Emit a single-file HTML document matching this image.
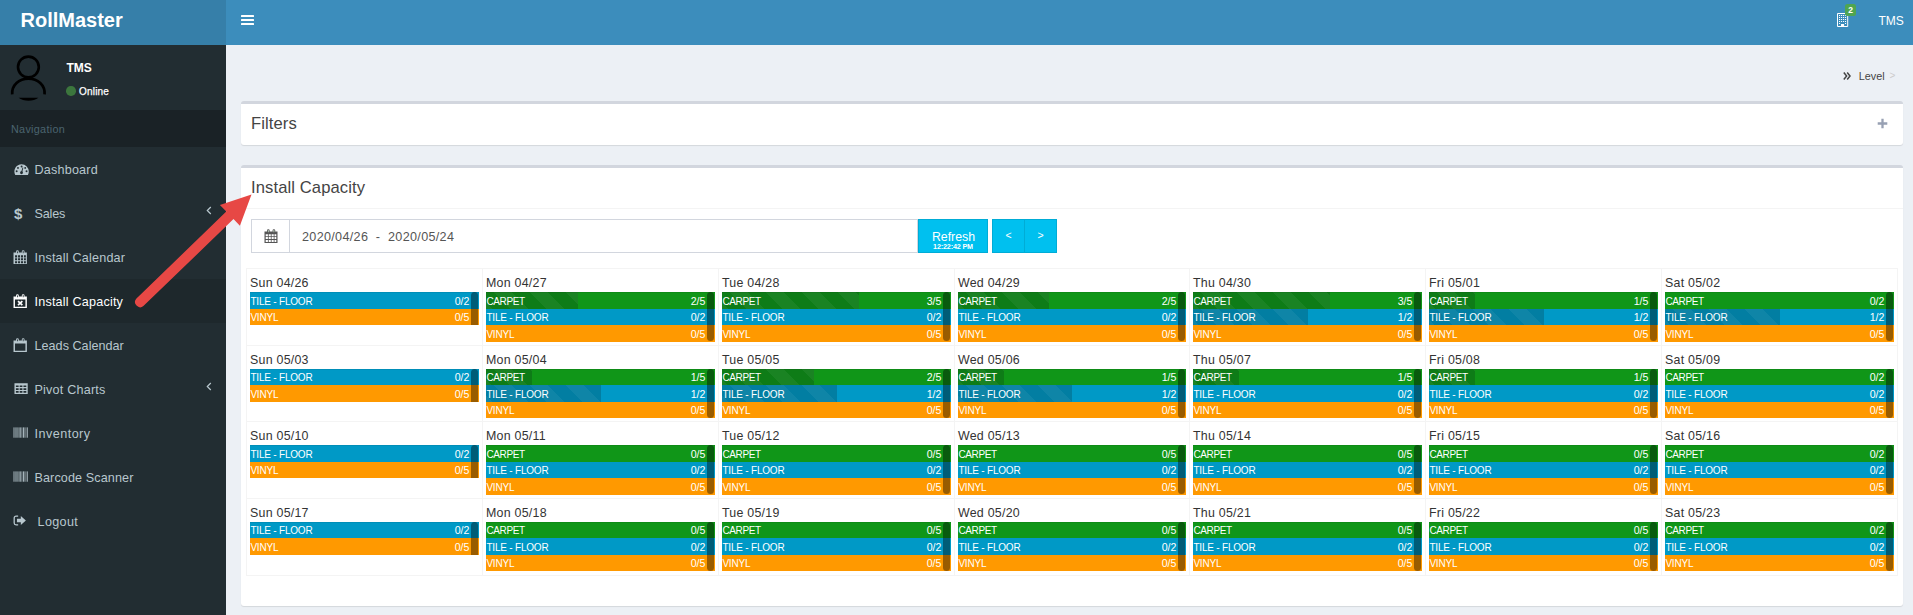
<!DOCTYPE html>
<html lang="en">
<head>
<meta charset="utf-8">
<title>RollMaster - Install Capacity</title>
<style>
*{box-sizing:border-box}
html,body{margin:0;padding:0}
body{width:1913px;height:615px;overflow:hidden;background:#ecf0f5;font-family:"Liberation Sans",Arial,sans-serif;font-size:12.6px;color:#333;position:relative}
a{color:inherit;text-decoration:none}
ul{list-style:none;margin:0;padding:0}
/* header */
.main-header{position:absolute;left:0;top:0;width:1913px;height:45px;background:#3c8dbc}
.logo{position:absolute;left:0;top:0;width:226px;height:45px;background:#367fa9;color:#fff;font-weight:700;font-size:20px;line-height:45px;padding-left:20.5px;letter-spacing:0}
.logo span{position:relative;top:-2.5px}
.toggle{position:absolute;left:241px;top:15px;width:12.5px;height:10px}
.toggle i{display:block;height:2px;background:#fff;margin-bottom:2px;border-radius:.5px}
.nav-right{position:absolute;right:0;top:0;height:45px}
.nav-user{position:absolute;left:1878.5px;top:0;line-height:43px;color:#fff;font-size:12px}
.bld{position:absolute;left:1837px;top:13px}
.badge{position:absolute;left:1845px;top:4px;width:11px;height:12px;border-radius:2.5px;background:#4fa550;color:#fff;font-size:8.5px;font-weight:700;line-height:13px;text-align:center}
/* sidebar */
.main-sidebar{position:absolute;left:0;top:45px;width:226px;height:570px;background:#222d32;color:#b8c7ce}
.user-panel{position:absolute;left:0;top:0;width:226px;height:65px}
.avatar{position:absolute;left:8px;top:10px}
.user-panel .name{position:absolute;left:66.4px;top:16px;color:#fff;font-weight:700;font-size:12px;line-height:14px}
.user-panel .status{position:absolute;left:66px;top:40.5px;color:#fff;font-size:10px;line-height:11px;letter-spacing:.2px}
.user-panel .status b{position:absolute;left:0;top:.5px;width:9.6px;height:9.6px;border-radius:50%;background:#3c763d}
.user-panel .status span{position:absolute;left:13px;top:0;-webkit-text-stroke:.25px #fff}
.sb-header{position:absolute;left:0;top:65px;width:226px;height:37px;background:#1a2226;color:#4b646f;font-size:10.8px;line-height:39px;padding-left:11px;letter-spacing:.3px}
.sidebar-menu{position:absolute;left:0;top:102px;width:226px}
.sidebar-menu li{height:44px;line-height:46px;position:relative;border-left:3px solid transparent;padding-left:31px;font-size:12.6px}
.sidebar-menu li.active{background:#1e282c;color:#fff}
.sidebar-menu li svg{position:absolute}
.sidebar-menu li .t{position:absolute;left:31.5px;top:0;white-space:nowrap;letter-spacing:.2px}
.sidebar-menu li .t.lo{left:34.6px}
.sidebar-menu li .dollar{position:absolute;left:11px;top:0;font-size:15px;font-weight:700;color:#b8c7ce}
/* content */
.crumb{position:absolute;left:1843px;top:70px;font-size:10.8px;color:#444}
.box{position:absolute;left:241px;width:1662px;background:#fff;border-top:3px solid #d2d6de;border-radius:3px;box-shadow:0 1px 1px rgba(0,0,0,.1)}
.box h3{margin:0;font-weight:400;font-size:16.6px;line-height:20px;letter-spacing:.1px;color:#444;position:absolute;left:10px;white-space:nowrap}
#filters{top:101px;height:44px}
#cap{top:165px;height:441px}
.hr{position:absolute;left:0;top:40px;width:100%;height:1px;background:#f4f4f4}

/* controls */
.ig{position:absolute;left:10px;top:51px;height:34px;width:667px}
.ig .addon{position:absolute;left:0;top:0;width:39px;height:34px;border:1px solid #d2d6de;border-right:0;background:#fff}
.ig .inp{position:absolute;left:38px;top:0;width:629px;height:34px;border:1px solid #d2d6de;background:#fff;line-height:35px;padding-left:12px;color:#555;font-size:12.6px;white-space:pre;letter-spacing:.32px}
.btn{position:absolute;top:51px;height:34px;background:#00c0ef;border:1px solid #00acd6;color:#fff;text-align:center}
#refresh{left:677px;width:70px}
#refresh .t{position:absolute;left:.5px;width:100%;top:10px;font-size:12.3px;line-height:14px}
#refresh .s{position:absolute;left:0;width:100%;top:22.600px;font-size:7.2px;line-height:8px;font-weight:700;letter-spacing:-.15px}
#prev{left:751px;width:33px;line-height:31px;font-size:10.5px}
#next{left:783px;width:33px;line-height:31px;font-size:10.5px}
/* grid */
table.grid{position:absolute;left:5px;top:99.5px;width:1652px;border-collapse:collapse;table-layout:fixed}
table.grid td{border:1px solid #f4f4f4;height:77px;padding:0;vertical-align:top;position:relative}
.day{position:absolute;left:3px;top:7px;font-size:12.4px;line-height:14px;color:#333;white-space:nowrap;letter-spacing:.25px}
.bars{position:absolute;left:3px;right:3px;top:23.5px;overflow:hidden}
.bar{position:relative;height:17px;color:#fff;font-size:10px;line-height:19px;overflow:hidden}
.bars .bar:nth-child(1){height:17px}
.bars .bar:nth-child(2){height:16px}
.bars .bar:nth-child(2) span{top:-1px}
tr.e .bars .bar:nth-child(1){height:16px}
tr.e .bars .bar:nth-child(2){height:17px}
tr.e .bars .bar:nth-child(3){height:16px}
tr.e .bars .bar:nth-child(1) span{top:-1px}
tr.e .bars .bar:nth-child(2) span{top:0}
tr.e .bars .bar:nth-child(3) span{top:-1px}
tr.r2 td{height:76px}

.bar.g{background:#109618}.bar.b{background:#0099c6}.bar.o{background:#ff9900}
.bar .fill{position:absolute;left:0;top:0;bottom:0;background-position:7px 0;background-color:rgba(10,20,20,.2);background-image:linear-gradient(45deg,rgba(255,255,255,.05) 25%,transparent 25%,transparent 50%,rgba(255,255,255,.05) 50%,rgba(255,255,255,.05) 75%,transparent 75%,transparent);background-size:36px 36px}
.bar .lbl{position:absolute;left:.4px;top:0;letter-spacing:-.2px}
.bar.g .lbl{letter-spacing:-.35px}
.bar .val{position:absolute;right:9.6px;top:0;font-size:10.6px}
.bars::after{content:"";position:absolute;left:0;right:0;top:0;height:1px;background:rgba(0,0,0,.07)}
.thumb{position:absolute;right:1px;top:.2px;height:48.6px;width:7px;border-radius:3.5px;background:rgba(0,0,0,.4)}
</style>
</head>
<body>
<header class="main-header">
  <a class="logo"><span>RollMaster</span></a>
  <div class="toggle"><i></i><i></i><i></i></div>
  <svg class="bld" width="12" height="15" viewBox="0 0 12 15"><path fill="none" stroke="#fff" stroke-width="1" d="M.5.500h10.200v13h-10.200z"/><g fill="#fff"><rect x="2" y="2" width="1.100" height="1"/><rect x="4" y="2" width="1.100" height="1"/><rect x="6" y="2" width="1.100" height="1"/><rect x="8" y="2" width="1.100" height="1"/><rect x="2" y="4" width="1.100" height="1"/><rect x="4" y="4" width="1.100" height="1"/><rect x="6" y="4" width="1.100" height="1"/><rect x="8" y="4" width="1.100" height="1"/><rect x="2" y="6" width="1.100" height="1"/><rect x="4" y="6" width="1.100" height="1"/><rect x="6" y="6" width="1.100" height="1"/><rect x="8" y="6" width="1.100" height="1"/><rect x="2" y="8" width="1.100" height="1"/><rect x="4" y="8" width="1.100" height="1"/><rect x="6" y="8" width="1.100" height="1"/><rect x="8" y="8" width="1.100" height="1"/><rect x="2" y="10" width="1.100" height="1"/><rect x="8" y="10" width="1.100" height="1"/><rect x="4" y="11" width="3.100" height="2.600"/></g></svg>
  <div class="badge">2</div>
  <div class="nav-user">TMS</div>
</header>
<aside class="main-sidebar">
  <div class="user-panel"><svg class="avatar" width="40" height="46" viewBox="0 0 40 46"><circle cx="20.400" cy="12" r="10.400" fill="none" stroke="#000" stroke-width="2.600"/><path d="M4.200 39.300C3.600 30 11 23.600 20.400 23.600S37.200 30 36.600 39.300" fill="none" stroke="#000" stroke-width="2.700"/><path d="M10.600 42.800h19.800c-2.400 1.900-6.200 2.900-9.900 2.900s-7.500-1-9.900-2.900z" fill="#000"/></svg><div class="name">TMS</div><div class="status"><b></b><span>Online</span></div></div>
  <div class="sb-header">Navigation</div>
  <ul class="sidebar-menu">
    <li><svg style="left:10.6px;top:16.600px" width="15.200" height="11.400" viewBox="0 0 16 12"><path fill="#b8c7ce" d="M8 .3a7.6 7.6 0 0 1 7.6 7.6c0 1.3-.3 2.5-.9 3.6c-.1.2-.3.3-.5.3H1.800c-.2 0-.4-.1-.5-.3A7.600 7.600 0 0 1 8 .3z"/><g fill="#222d32"><circle cx="8" cy="2.600" r="1"/><circle cx="4.200" cy="4.100" r="1"/><circle cx="11.800" cy="4.100" r="1"/><circle cx="2.800" cy="7.700" r="1"/><circle cx="13.200" cy="7.700" r="1"/><circle cx="7.900" cy="9.200" r="1.500"/><path d="M7.400 8.700L9 3.800l.8.200L8.600 9z"/></g></svg><span class="t">Dashboard</span></li>
    <li><span class="dollar">$</span><span class="t" style="letter-spacing:-.16px">Sales</span><svg class="chev" style="left:203.3px;top:15.2px" width="6" height="9" viewBox="0 0 6 9"><path d="M4.800 1L1.300 4.500L4.800 8" fill="none" stroke="#b8c7ce" stroke-width="1.200"/></svg></li>
    <li><svg style="left:10.300px;top:15px" width="14.400" height="14.200" preserveAspectRatio="none" viewBox="0 0 14 14"><path fill="#b8c7ce" fill-rule="evenodd" d="M0.5 2.5h13v11.5h-13z M2 5.3h2v2h-2z M4.9 5.3h2v2h-2z M7.8 5.3h2v2h-2z M10.7 5.3h1.8v2h-1.8z M2 8.2h2v2h-2z M4.9 8.2h2v2h-2z M7.8 8.2h2v2h-2z M10.7 8.2h1.8v2h-1.8z M2 11.1h2v1.9h-2z M4.9 11.1h2v1.9h-2z M7.8 11.1h2v1.9h-2z M10.7 11.1h1.8v1.9h-1.8z"/><rect x="3" y="0.3" width="2.6" height="3.6" rx="1.2" fill="#b8c7ce"/><rect x="8.6" y="0.3" width="2.6" height="3.6" rx="1.2" fill="#b8c7ce"/><rect x="3.9" y="1" width=".8" height="2.3" rx=".4" fill="#222d32"/><rect x="9.5" y="1" width=".8" height="2.3" rx=".4" fill="#222d32"/></svg><span class="t">Install Calendar</span></li>
    <li class="active"><svg style="left:10.300px;top:15px" width="14.400" height="14.200" preserveAspectRatio="none" viewBox="0 0 14 14"><path fill="#fff" fill-rule="evenodd" d="M0.500 2.500h13v11.500h-13z M1.900 5.400h10.200v7.200h-10.200z"/><rect x="3" y=".3" width="2.600" height="3.600" rx="1.200" fill="#fff"/><rect x="8.600" y=".3" width="2.600" height="3.600" rx="1.200" fill="#fff"/><rect x="3.900" y="1" width=".8" height="2.300" rx=".4" fill="#1e282c"/><rect x="9.500" y="1" width=".8" height="2.300" rx=".4" fill="#1e282c"/><path d="M4.900 7l4.200 4M9.100 7l-4.200 4" stroke="#fff" stroke-width="1.700"/></svg><span class="t">Install Capacity</span></li>
    <li><svg style="left:10.300px;top:15px" width="14.400" height="14.200" preserveAspectRatio="none" viewBox="0 0 14 14"><path fill="#b8c7ce" fill-rule="evenodd" d="M0.500 2.500h13v11.500h-13z M1.900 5.400h10.200v7.200h-10.200z"/><rect x="3" y=".3" width="2.600" height="3.600" rx="1.200" fill="#b8c7ce"/><rect x="8.600" y=".3" width="2.600" height="3.600" rx="1.200" fill="#b8c7ce"/><rect x="3.900" y="1" width=".8" height="2.300" rx=".4" fill="#222d32"/><rect x="9.500" y="1" width=".8" height="2.300" rx=".4" fill="#222d32"/></svg><span class="t" style="letter-spacing:.03px">Leads Calendar</span></li>
    <li><svg style="left:10.5px;top:15.800px" width="14.200" height="11.500" preserveAspectRatio="none" viewBox="0 0 15 12"><path fill="#b8c7ce" fill-rule="evenodd" d="M.5.300h14v11.400h-14z M2 2.600h2.900v1.700h-2.900z M6 2.600h2.900v1.700h-2.900z M10 2.600h3v1.700h-3z M2 5.500h2.900v1.700h-2.900z M6 5.500h2.900v1.700h-2.900z M10 5.500h3v1.700h-3z M2 8.400h2.900v1.700h-2.900z M6 8.400h2.900v1.700h-2.900z M10 8.400h3v1.700h-3z"/></svg><span class="t">Pivot Charts</span><svg class="chev" style="left:203.3px;top:15.2px" width="6" height="9" viewBox="0 0 6 9"><path d="M4.800 1L1.300 4.500L4.800 8" fill="none" stroke="#b8c7ce" stroke-width="1.200"/></svg></li>
    <li><svg style="left:10.400px;top:15.800px;opacity:.88" width="15.400" height="11.300" preserveAspectRatio="none" viewBox="0 0 16 12"><g fill="#b8c7ce"><rect x=".5" y=".4" width="1.100" height="11"/><rect x="2.100" y=".4" width=".6" height="11"/><rect x="3.300" y=".4" width=".6" height="11"/><rect x="4.600" y=".4" width="1.100" height="11"/><rect x="6.300" y=".4" width=".6" height="11"/><rect x="7.500" y=".4" width="1.100" height="11"/><rect x="9.100" y=".4" width=".6" height="11"/><rect x="10.400" y=".4" width="1.100" height="11"/><rect x="12" y=".4" width=".6" height="11"/><rect x="13.100" y=".4" width=".6" height="11"/><rect x="14.300" y=".4" width="1.100" height="11"/></g></svg><span class="t" style="letter-spacing:.47px">Inventory</span></li>
    <li><svg style="left:10.400px;top:15.800px;opacity:.88" width="15.400" height="11.300" preserveAspectRatio="none" viewBox="0 0 16 12"><g fill="#b8c7ce"><rect x=".5" y=".4" width="1.100" height="11"/><rect x="2.100" y=".4" width=".6" height="11"/><rect x="3.300" y=".4" width=".6" height="11"/><rect x="4.600" y=".4" width="1.100" height="11"/><rect x="6.300" y=".4" width=".6" height="11"/><rect x="7.500" y=".4" width="1.100" height="11"/><rect x="9.100" y=".4" width=".6" height="11"/><rect x="10.400" y=".4" width="1.100" height="11"/><rect x="12" y=".4" width=".6" height="11"/><rect x="13.100" y=".4" width=".6" height="11"/><rect x="14.300" y=".4" width="1.100" height="11"/></g></svg><span class="t" style="letter-spacing:.11px">Barcode Scanner</span></li>
    <li><svg style="left:10.400px;top:16.400px" width="13.800" height="11" preserveAspectRatio="none" viewBox="0 0 15 12"><path fill="none" stroke="#b8c7ce" stroke-width="1.400" d="M5.600 1.200H3.300a2 2 0 0 0-2 2v5.600a2 2 0 0 0 2 2h2.300"/><path fill="#b8c7ce" d="M4.300 4h4.200V1.200L14 6l-5.500 4.800V8H4.300z"/></svg><span class="t lo" style="letter-spacing:.33px">Logout</span></li>
  </ul>
</aside>
<section class="content">
  <div class="crumb"><svg width="8" height="8" viewBox="0 0 8 8" style="position:absolute;left:0;top:2.300px"><path d="M.8.600L3.600 4L.8 7.400M4.200.6L7 4L4.200 7.400" fill="none" stroke="#444" stroke-width="1.500"/></svg><span style="position:absolute;left:15.8px;top:0">Level</span><span style="position:absolute;left:46.500px;top:0;color:#ccc;font-size:10px">&gt;</span></div>
  <div class="box" id="filters"><h3 style="top:10px">Filters</h3><svg width="11" height="11" viewBox="0 0 11 11" style="position:absolute;left:1636px;top:14px"><path d="M5.500.700v9.600M.7 5.500h9.600" stroke="#97a0b3" stroke-width="2.300" fill="none"/></svg></div>
  <div class="box" id="cap"><h3 style="top:9.9px">Install Capacity</h3><div class="hr"></div>
  <div class="ig"><div class="addon"><svg width="14" height="14" viewBox="0 0 14 14" style="position:absolute;left:12px;top:9px"><path fill="#555" fill-rule="evenodd" d="M0.500 2.500h13v11.500h-13z M1.700 5.300h2.200v2h-2.200z M4.700 5.300h2.100v2h-2.100z M7.600 5.300h2.100v2h-2.100z M10.500 5.300h1.800v2h-1.800z M1.700 8.100h2.200v2h-2.200z M4.700 8.100h2.100v2h-2.100z M7.600 8.100h2.100v2h-2.100z M10.500 8.100h1.800v2h-1.800z M1.700 10.900h2.200v2h-2.200z M4.700 10.900h2.100v2h-2.100z M7.600 10.900h2.100v2h-2.100z M10.500 10.900h1.800v2h-1.800z"/><rect x="3" y=".3" width="2.600" height="3.600" rx="1.200" fill="#555"/><rect x="8.600" y=".3" width="2.600" height="3.600" rx="1.200" fill="#555"/><rect x="3.900" y="1" width=".8" height="2.300" rx=".4" fill="#cfe6cf"/><rect x="9.500" y="1" width=".8" height="2.300" rx=".4" fill="#cfe6cf"/></svg></div><div class="inp">2020/04/26  -  2020/05/24</div></div>
  <div class="btn" id="refresh"><div class="t">Refresh</div><div class="s">12:22:42 PM</div></div>
  <div class="btn" id="prev">&lt;</div><div class="btn" id="next">&gt;</div>
  <table class="grid"><colgroup><col style="width:236px"><col style="width:236px"><col style="width:236px"><col style="width:235px"><col style="width:236px"><col style="width:236px"><col style="width:236px"></colgroup>
<tr class="r1"><td><div class="day">Sun 04/26</div><div class="bars"><div class="bar b"><span class="lbl">TILE - FLOOR</span><span class="val">0/2</span></div><div class="bar o"><span class="lbl">VINYL</span><span class="val">0/5</span></div><i class="thumb"></i></div></td><td><div class="day">Mon 04/27</div><div class="bars"><div class="bar g"><div class="fill" style="width:40%"></div><span class="lbl">CARPET</span><span class="val">2/5</span></div><div class="bar b"><span class="lbl">TILE - FLOOR</span><span class="val">0/2</span></div><div class="bar o"><span class="lbl">VINYL</span><span class="val">0/5</span></div><i class="thumb"></i></div></td><td><div class="day">Tue 04/28</div><div class="bars"><div class="bar g"><div class="fill" style="width:60%"></div><span class="lbl">CARPET</span><span class="val">3/5</span></div><div class="bar b"><span class="lbl">TILE - FLOOR</span><span class="val">0/2</span></div><div class="bar o"><span class="lbl">VINYL</span><span class="val">0/5</span></div><i class="thumb"></i></div></td><td><div class="day">Wed 04/29</div><div class="bars"><div class="bar g"><div class="fill" style="width:40%"></div><span class="lbl">CARPET</span><span class="val">2/5</span></div><div class="bar b"><span class="lbl">TILE - FLOOR</span><span class="val">0/2</span></div><div class="bar o"><span class="lbl">VINYL</span><span class="val">0/5</span></div><i class="thumb"></i></div></td><td><div class="day">Thu 04/30</div><div class="bars"><div class="bar g"><div class="fill" style="width:60%"></div><span class="lbl">CARPET</span><span class="val">3/5</span></div><div class="bar b"><div class="fill" style="width:50%"></div><span class="lbl">TILE - FLOOR</span><span class="val">1/2</span></div><div class="bar o"><span class="lbl">VINYL</span><span class="val">0/5</span></div><i class="thumb"></i></div></td><td><div class="day">Fri 05/01</div><div class="bars"><div class="bar g"><div class="fill" style="width:20%"></div><span class="lbl">CARPET</span><span class="val">1/5</span></div><div class="bar b"><div class="fill" style="width:50%"></div><span class="lbl">TILE - FLOOR</span><span class="val">1/2</span></div><div class="bar o"><span class="lbl">VINYL</span><span class="val">0/5</span></div><i class="thumb"></i></div></td><td><div class="day">Sat 05/02</div><div class="bars"><div class="bar g"><span class="lbl">CARPET</span><span class="val">0/2</span></div><div class="bar b"><div class="fill" style="width:50%"></div><span class="lbl">TILE - FLOOR</span><span class="val">1/2</span></div><div class="bar o"><span class="lbl">VINYL</span><span class="val">0/5</span></div><i class="thumb"></i></div></td></tr>
<tr class="r2 e"><td><div class="day">Sun 05/03</div><div class="bars"><div class="bar b"><span class="lbl">TILE - FLOOR</span><span class="val">0/2</span></div><div class="bar o"><span class="lbl">VINYL</span><span class="val">0/5</span></div><i class="thumb"></i></div></td><td><div class="day">Mon 05/04</div><div class="bars"><div class="bar g"><div class="fill" style="width:20%"></div><span class="lbl">CARPET</span><span class="val">1/5</span></div><div class="bar b"><div class="fill" style="width:50%"></div><span class="lbl">TILE - FLOOR</span><span class="val">1/2</span></div><div class="bar o"><span class="lbl">VINYL</span><span class="val">0/5</span></div><i class="thumb"></i></div></td><td><div class="day">Tue 05/05</div><div class="bars"><div class="bar g"><div class="fill" style="width:40%"></div><span class="lbl">CARPET</span><span class="val">2/5</span></div><div class="bar b"><div class="fill" style="width:50%"></div><span class="lbl">TILE - FLOOR</span><span class="val">1/2</span></div><div class="bar o"><span class="lbl">VINYL</span><span class="val">0/5</span></div><i class="thumb"></i></div></td><td><div class="day">Wed 05/06</div><div class="bars"><div class="bar g"><div class="fill" style="width:20%"></div><span class="lbl">CARPET</span><span class="val">1/5</span></div><div class="bar b"><div class="fill" style="width:50%"></div><span class="lbl">TILE - FLOOR</span><span class="val">1/2</span></div><div class="bar o"><span class="lbl">VINYL</span><span class="val">0/5</span></div><i class="thumb"></i></div></td><td><div class="day">Thu 05/07</div><div class="bars"><div class="bar g"><div class="fill" style="width:20%"></div><span class="lbl">CARPET</span><span class="val">1/5</span></div><div class="bar b"><span class="lbl">TILE - FLOOR</span><span class="val">0/2</span></div><div class="bar o"><span class="lbl">VINYL</span><span class="val">0/5</span></div><i class="thumb"></i></div></td><td><div class="day">Fri 05/08</div><div class="bars"><div class="bar g"><div class="fill" style="width:20%"></div><span class="lbl">CARPET</span><span class="val">1/5</span></div><div class="bar b"><span class="lbl">TILE - FLOOR</span><span class="val">0/2</span></div><div class="bar o"><span class="lbl">VINYL</span><span class="val">0/5</span></div><i class="thumb"></i></div></td><td><div class="day">Sat 05/09</div><div class="bars"><div class="bar g"><span class="lbl">CARPET</span><span class="val">0/2</span></div><div class="bar b"><span class="lbl">TILE - FLOOR</span><span class="val">0/2</span></div><div class="bar o"><span class="lbl">VINYL</span><span class="val">0/5</span></div><i class="thumb"></i></div></td></tr>
<tr class="r3"><td><div class="day">Sun 05/10</div><div class="bars"><div class="bar b"><span class="lbl">TILE - FLOOR</span><span class="val">0/2</span></div><div class="bar o"><span class="lbl">VINYL</span><span class="val">0/5</span></div><i class="thumb"></i></div></td><td><div class="day">Mon 05/11</div><div class="bars"><div class="bar g"><span class="lbl">CARPET</span><span class="val">0/5</span></div><div class="bar b"><span class="lbl">TILE - FLOOR</span><span class="val">0/2</span></div><div class="bar o"><span class="lbl">VINYL</span><span class="val">0/5</span></div><i class="thumb"></i></div></td><td><div class="day">Tue 05/12</div><div class="bars"><div class="bar g"><span class="lbl">CARPET</span><span class="val">0/5</span></div><div class="bar b"><span class="lbl">TILE - FLOOR</span><span class="val">0/2</span></div><div class="bar o"><span class="lbl">VINYL</span><span class="val">0/5</span></div><i class="thumb"></i></div></td><td><div class="day">Wed 05/13</div><div class="bars"><div class="bar g"><span class="lbl">CARPET</span><span class="val">0/5</span></div><div class="bar b"><span class="lbl">TILE - FLOOR</span><span class="val">0/2</span></div><div class="bar o"><span class="lbl">VINYL</span><span class="val">0/5</span></div><i class="thumb"></i></div></td><td><div class="day">Thu 05/14</div><div class="bars"><div class="bar g"><span class="lbl">CARPET</span><span class="val">0/5</span></div><div class="bar b"><span class="lbl">TILE - FLOOR</span><span class="val">0/2</span></div><div class="bar o"><span class="lbl">VINYL</span><span class="val">0/5</span></div><i class="thumb"></i></div></td><td><div class="day">Fri 05/15</div><div class="bars"><div class="bar g"><span class="lbl">CARPET</span><span class="val">0/5</span></div><div class="bar b"><span class="lbl">TILE - FLOOR</span><span class="val">0/2</span></div><div class="bar o"><span class="lbl">VINYL</span><span class="val">0/5</span></div><i class="thumb"></i></div></td><td><div class="day">Sat 05/16</div><div class="bars"><div class="bar g"><span class="lbl">CARPET</span><span class="val">0/2</span></div><div class="bar b"><span class="lbl">TILE - FLOOR</span><span class="val">0/2</span></div><div class="bar o"><span class="lbl">VINYL</span><span class="val">0/5</span></div><i class="thumb"></i></div></td></tr>
<tr class="r4 e"><td><div class="day">Sun 05/17</div><div class="bars"><div class="bar b"><span class="lbl">TILE - FLOOR</span><span class="val">0/2</span></div><div class="bar o"><span class="lbl">VINYL</span><span class="val">0/5</span></div><i class="thumb"></i></div></td><td><div class="day">Mon 05/18</div><div class="bars"><div class="bar g"><span class="lbl">CARPET</span><span class="val">0/5</span></div><div class="bar b"><span class="lbl">TILE - FLOOR</span><span class="val">0/2</span></div><div class="bar o"><span class="lbl">VINYL</span><span class="val">0/5</span></div><i class="thumb"></i></div></td><td><div class="day">Tue 05/19</div><div class="bars"><div class="bar g"><span class="lbl">CARPET</span><span class="val">0/5</span></div><div class="bar b"><span class="lbl">TILE - FLOOR</span><span class="val">0/2</span></div><div class="bar o"><span class="lbl">VINYL</span><span class="val">0/5</span></div><i class="thumb"></i></div></td><td><div class="day">Wed 05/20</div><div class="bars"><div class="bar g"><span class="lbl">CARPET</span><span class="val">0/5</span></div><div class="bar b"><span class="lbl">TILE - FLOOR</span><span class="val">0/2</span></div><div class="bar o"><span class="lbl">VINYL</span><span class="val">0/5</span></div><i class="thumb"></i></div></td><td><div class="day">Thu 05/21</div><div class="bars"><div class="bar g"><span class="lbl">CARPET</span><span class="val">0/5</span></div><div class="bar b"><span class="lbl">TILE - FLOOR</span><span class="val">0/2</span></div><div class="bar o"><span class="lbl">VINYL</span><span class="val">0/5</span></div><i class="thumb"></i></div></td><td><div class="day">Fri 05/22</div><div class="bars"><div class="bar g"><span class="lbl">CARPET</span><span class="val">0/5</span></div><div class="bar b"><span class="lbl">TILE - FLOOR</span><span class="val">0/2</span></div><div class="bar o"><span class="lbl">VINYL</span><span class="val">0/5</span></div><i class="thumb"></i></div></td><td><div class="day">Sat 05/23</div><div class="bars"><div class="bar g"><span class="lbl">CARPET</span><span class="val">0/2</span></div><div class="bar b"><span class="lbl">TILE - FLOOR</span><span class="val">0/2</span></div><div class="bar o"><span class="lbl">VINYL</span><span class="val">0/5</span></div><i class="thumb"></i></div></td></tr>
  </table>
  </div>
</section>
<svg class="arrow" width="1913" height="615" viewBox="0 0 1913 615" style="position:absolute;left:0;top:0;pointer-events:none"><path d="M251.5 194.5 L239.9 225.7 L233.5 219.1 L143.4 306.1 A5.2 5.2 0 0 1 136.2 298.7 L226.3 211.6 L219.9 205.0 Z" fill="#e74845"/></svg>
</body>
</html>
